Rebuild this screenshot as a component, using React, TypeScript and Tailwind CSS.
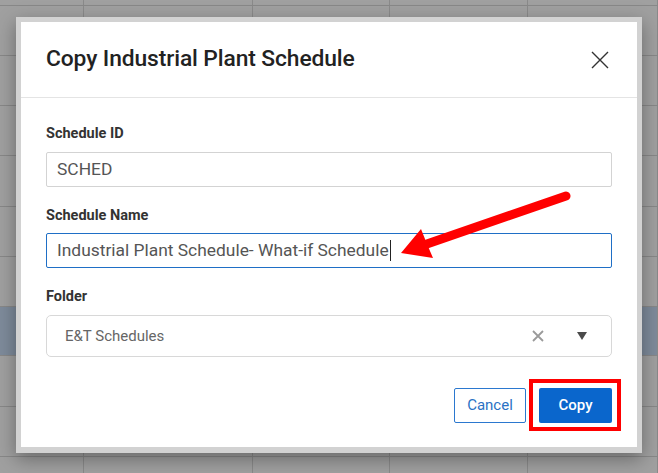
import React from 'react';

const cols = [84, 169, 137, 138, 130];

const BgRow: React.FC<{ h: number; blue?: boolean }> = ({ h, blue }) => (
  <div
    className={`flex border-b border-[#888888] ${blue ? 'bg-[#7e8b9b]' : 'bg-[#a0a0a0]'}`}
    style={{ height: h }}
  >
    {cols.map((w, i) => (
      <div key={i} className="h-full border-r border-[#8a8a8a] shrink-0" style={{ width: w }} />
    ))}
  </div>
);

const Label: React.FC<{ children: React.ReactNode }> = ({ children }) => (
  <div className="text-[14.5px] font-bold leading-[20px] text-[#333333]">{children}</div>
);

const App: React.FC = () => {
  const rows = [6, 50, 50, 50, 51, 50, 50, 49, 51, 50, 30];

  return (
    <div
      className="relative w-[658px] h-[473px] overflow-hidden bg-[#9a9a9a]"
      style={{ fontFamily: 'Roboto, "Liberation Sans", sans-serif' }}
    >
      {/* spreadsheet behind the modal */}
      <div className="flex flex-col">
        {rows.map((h, i) => (
          <BgRow key={i} h={h} blue={i === 7} />
        ))}
      </div>

      {/* modal */}
      <div className="absolute left-[16px] top-[17px] w-[626px] border-[5px] border-b-[6px] border-[#d2d2d2] bg-white shadow-[0_6px_18px_rgba(0,0,0,0.35)]">
        <div className="h-[76px] pl-[25px] pr-[28px] flex items-center justify-between border-b border-[#e4e4e4]">
          <h1 className="text-[22.8px] font-medium text-[#222222] tracking-[-0.1px]">Copy Industrial Plant Schedule</h1>
          <svg width="18" height="18" viewBox="0 0 18 18">
            <path d="M1 1 L17 17 M17 1 L1 17" stroke="#333333" strokeWidth="1.4" fill="none" />
          </svg>
        </div>

        <div className="px-[25px] pt-[26px] pb-[24px]">
          <Label>Schedule ID</Label>
          <div className="mt-[8px] h-[35px] border border-[#d3d3d3] rounded-[2px] flex items-center px-[10px] text-[17.4px] text-[#555555]">
            SCHED
          </div>

          <div className="mt-[19px]">
            <Label>Schedule Name</Label>
          </div>
          <div className="mt-[7px] h-[35px] border border-[#1f6fc6] rounded-[2px] flex items-center px-[10px] text-[17.4px] text-[#555555]">
            <span>Industrial Plant Schedule- What-if Schedule</span>
            <span className="ml-[1px] w-[1px] h-[21px] bg-[#222222]" />
          </div>

          <div className="mt-[19px]">
            <Label>Folder</Label>
          </div>
          <div className="mt-[8px] h-[42px] border border-[#d8d8d8] rounded-[5px] flex items-center pl-[18px] pr-[24px] text-[15px] text-[#666666]">
            <span className="flex-1">E&amp;T Schedules</span>
            <svg width="12" height="12" viewBox="0 0 12 12" className="mr-[33px]">
              <path d="M1 1 L11 11 M11 1 L1 11" stroke="#9a9a9a" strokeWidth="1.8" fill="none" />
            </svg>
            <svg width="10" height="8" viewBox="0 0 10 8">
              <path d="M0 0 L10 0 L5 8 Z" fill="#4a4a4a" />
            </svg>
          </div>

          <div className="mt-[31px] flex justify-end gap-[13px]">
            <button className="w-[72px] h-[35px] border border-[#2b78cf] rounded-[2px] text-[15px] text-[#2a72c4] bg-white">
              Cancel
            </button>
            <button className="w-[73px] h-[35px] rounded-[2px] text-[15px] font-medium text-white bg-[#0a66cc]">
              Copy
            </button>
          </div>
        </div>
      </div>

      {/* annotation: red box around Copy */}
      <div className="absolute left-[529px] top-[379px] w-[92px] h-[52px] border-4 border-[#ff0000]" />

      {/* annotation: red arrow */}
      <svg className="absolute left-0 top-0" width="658" height="473" viewBox="0 0 658 473">
        <line x1="566" y1="196" x2="424" y2="245" stroke="#ff0000" strokeWidth="9" strokeLinecap="round" />
        <polygon points="401,253 421,229 427,244 433,258" fill="#ff0000" />
      </svg>
    </div>
  );
};

export default App;
